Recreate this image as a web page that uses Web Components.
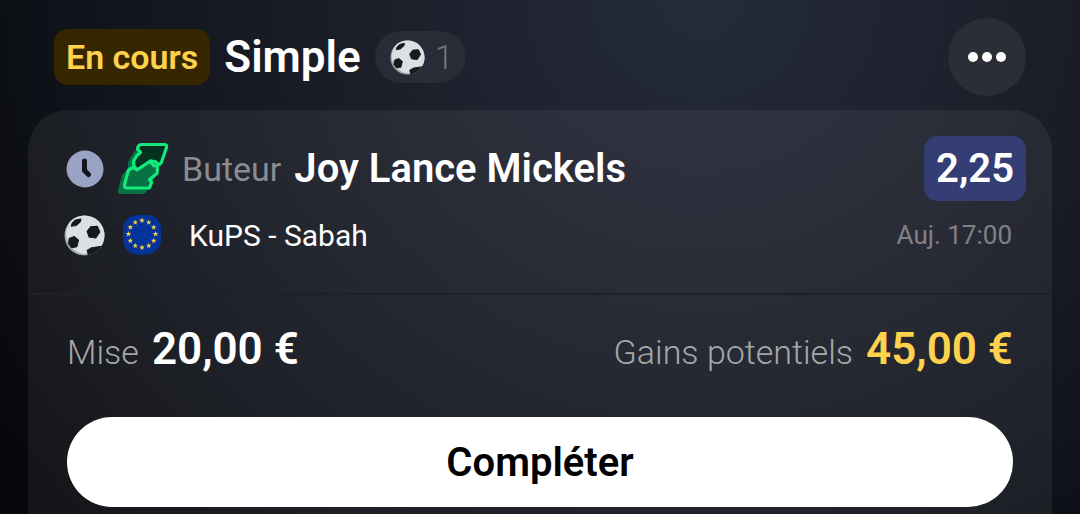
<!DOCTYPE html>
<html lang="fr">
<head>
<meta charset="utf-8">
<meta name="viewport" content="width=device-width, initial-scale=1">
<title>Pari simple en cours</title>
<style>
  html { background: #0a0b0f; }
  body { margin: 0; font-family: Roboto, "Liberation Sans", sans-serif; color: #fff; }
</style>
</head>
<body>
<bet-ticket>
  <ticket-header slot="header" status="En cours" kind="Simple" count="1"></ticket-header>
  <bet-selection slot="body" market="Buteur" pick="Joy Lance Mickels" odds="2,25" match="KuPS - Sabah" time="Auj. 17:00"></bet-selection>
  <bet-stakes slot="body">
    <stake-amount label="Mise">20,00 €</stake-amount>
    <stake-amount label="Gains potentiels" style="--amount: #ffd24d">45,00 €</stake-amount>
  </bet-stakes>
  <pill-button slot="body">Compléter</pill-button>
</bet-ticket>

<script>
const define = (name, render) => customElements.define(name, class extends HTMLElement {
  connectedCallback() {
    if (this.shadowRoot) return;
    this.attachShadow({ mode: "open" }).innerHTML = render(this);
  }
});

define("soccer-ball", () => `
<style>:host { display: block; flex: none; width: var(--size, 41px); height: var(--size, 41px); } svg { display: block; }</style>
<svg viewBox="0 0 40 40" width="100%" height="100%" aria-hidden="true">
  <defs><clipPath id="c"><circle cx="20" cy="20" r="19.5"/></clipPath></defs>
  <circle cx="20" cy="20" r="19.5" fill="#9fa8aa"/>
  <g clip-path="url(#c)">
    <circle cx="21.5" cy="18.5" r="19.5" fill="#d9e1e4"/>
    <g fill="#16181a" stroke="#16181a" stroke-width="1" stroke-linejoin="round">
      <path d="M22.5 16 26 11.5 32.5 11 35 16.5 31 22.5 24.5 21.5z"/>
      <path d="M7 11 8 8 11 5 16.5 3.8 16 6.5 12 10.2z"/>
      <path d="M5 23 10 21 14.2 24.5 12.5 31 7.5 32 4.5 28z"/>
      <path d="M22.5 34.5 27 32 37 30.5V40H24z"/>
    </g>
  </g>
</svg>`);

define("clock-icon", () => `
<style>:host { display: block; flex: none; width: 38px; height: 38px; } svg { display: block; }</style>
<svg viewBox="0 0 38 38" width="38" height="38" aria-hidden="true">
  <circle cx="19" cy="19" r="18.5" fill="#9ba3c4"/>
  <path d="M18.5 11V20.5L22.5 24.5" fill="none" stroke="#14151c" stroke-width="5" stroke-linecap="round" stroke-linejoin="round"/>
</svg>`);

define("swap-icon", () => `
<style>:host { display: block; flex: none; width: 52px; height: 54px; } svg { display: block; }</style>
<svg viewBox="0 0 52 54" width="52" height="54" aria-hidden="true">
  <path d="M5 33 11 27 11 20 17 10 24 4 40 22 36 42 29 50Q28 52 26 52H4Q0 52 1 48z" fill="#077044"/>
  <g stroke="#12ea7c" stroke-width="3.2" stroke-linejoin="round" stroke-linecap="round">
    <path d="M20 28 17 24 16.5 19.5 19.5 14 23.5 10.5 20.5 7Q21 2.5 25 2.5H47Q50.5 2.5 49.5 5.5L44.500 20Q43 23.500 41 22L38 19.5 33.500 19z" fill="#04321f"/>
    <path d="M11.5 28 16 25.5 20 28 33.5 19 36.5 23.5 40.5 24.5 40 31.5 32.5 37.5 34.5 40.5 32.5 46H10Q7 46 7.5 42.5z" fill="#077044"/>
  </g>
</svg>`);

define("europe-flag", () => {
  const star = "0,-2.9 .7,-.9 2.8,-.9 1.1,.4 1.7,2.4 0,1.2 -1.7,2.4 -1.1,.4 -2.8,-.9 -.7,-.9";
  let stars = "";
  for (let i = 0; i < 12; i++) {
    const a = i * Math.PI / 6;
    stars += `<polygon points="${star}" transform="translate(${19 + 13.5 * Math.sin(a)} ${19 - 13.5 * Math.cos(a)})"/>`;
  }
  return `
<style>:host { display: block; flex: none; width: 38px; height: 40px; } svg { display: block; }</style>
<svg viewBox="0 0 38 40" width="38" height="40" aria-hidden="true">
  <rect y="1" width="38" height="39" rx="15" fill="#0a2f7c"/>
  <rect width="38" height="38" rx="14" fill="#063399"/>
  <g fill="#f2cf4e">${stars}</g>
</svg>`;
});

define("bet-ticket", () => `
<style>
  :host { display: block; padding: 18px 28px 0;
    background: radial-gradient(ellipse 78% 150% at 65% 0, #252b39 0%, #1c1f2a 40%, #12151d 70%, #07080c 100%); }
  section { margin-top: 14px; padding-bottom: 7px; border-radius: 40px 40px 0 0; background: rgba(255, 255, 255, .06); }
</style>
<slot name="header"></slot>
<section><slot name="body"></slot></section>`);

define("ticket-header", el => `
<style>
  :host { display: flex; align-items: center; gap: 14px; padding: 0 26px; }
  .status { padding: 0 12px; border-radius: 14px; background: #352600; color: #ffd24d; font-size: 34px; font-weight: 600; line-height: 56px; }
  h1 { margin: 0; font-size: 44px; font-weight: 600; line-height: 56px; }
  .count { display: flex; align-items: center; gap: 10px; box-sizing: border-box; height: 52px; padding: 0 12px 0 15px; border-radius: 26px;
    background: #292b37; color: #73757e; font-size: 34px; font-weight: 300; --size: 35px; }
  button { display: flex; align-items: center; justify-content: center; gap: 4px; width: 78px; height: 78px; margin-left: auto;
    padding: 0; border: 0; border-radius: 50%; background: #2b2d37; }
  i { width: 10px; height: 10px; border-radius: 50%; background: #fff; }
</style>
<span class="status">${el.getAttribute("status")}</span>
<h1>${el.getAttribute("kind")}</h1>
<span class="count"><soccer-ball></soccer-ball>${el.getAttribute("count")}</span>
<button type="button" aria-label="Options"><i></i><i></i><i></i></button>`);

define("bet-selection", el => `
<style>
  :host { display: block; padding: 26px 26px 38px 38px; border-bottom: 2px solid #1e202a; }
  div { display: flex; align-items: center; }
  .pick { height: 65px; gap: 13px; }
  .market { color: #8b8c91; font-size: 34px; }
  .name { font-size: 40px; font-weight: 600; }
  .odds { margin-left: auto; padding: 0 12px; border-radius: 14px; background: #343e75; font-size: 40px; font-weight: 600; line-height: 65px; }
  .match { height: 40px; margin: 14px 14px 0 -2px; gap: 18px; font-size: 30px; }
  .teams { margin-left: 10px; }
  time { margin-left: auto; color: #808187; font-size: 26px; }
</style>
<div class="pick">
  <clock-icon></clock-icon><swap-icon></swap-icon>
  <span class="market">${el.getAttribute("market")}</span>
  <strong class="name">${el.getAttribute("pick")}</strong>
  <span class="odds">${el.getAttribute("odds")}</span>
</div>
<div class="match">
  <soccer-ball></soccer-ball><europe-flag></europe-flag>
  <span class="teams">${el.getAttribute("match")}</span>
  <time>${el.getAttribute("time")}</time>
</div>`);

define("bet-stakes", () => `
<style>:host { display: flex; justify-content: space-between; padding: 26px 39px 37px; }</style>
<slot></slot>`);

define("stake-amount", el => `
<style>
  :host { display: flex; align-items: baseline; gap: 13px; line-height: 56px; }
  span { color: #a6a7ab; font-size: 34px; font-weight: 300; }
  strong { color: var(--amount, #fff); font-size: 44px; font-weight: 600; }
</style>
<span>${el.getAttribute("label")}</span><strong><slot></slot></strong>`);

define("pill-button", () => `
<style>
  :host { display: block; padding: 0 39px; }
  button { display: block; width: 100%; height: 90px; padding: 0; border: 0; border-radius: 45px; background: #fff; color: #000;
    font: 600 40px Roboto, "Liberation Sans", sans-serif; }
</style>
<button type="button"><slot></slot></button>`);
</script>
</body>
</html>
